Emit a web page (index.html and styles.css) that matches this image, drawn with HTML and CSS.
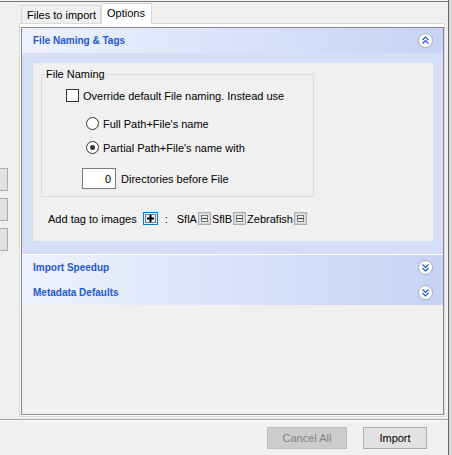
FILE: index.html
```html
<!DOCTYPE html>
<html>
<head>
<meta charset="utf-8">
<link rel="stylesheet" href="styles.css">
</head>
<body>
<div class="window">
  <div class="main">
    <div class="top">
      <div class="stubs">
        <div class="stub"></div>
        <div class="stub"></div>
        <div class="stub"></div>
      </div>
      <div class="tabs">
        <div class="tabstrip">
          <div class="tab">Files to import</div>
          <div class="tab active">Options</div>
        </div>
        <div class="pane">
          <div class="frame">
            <div class="hdr">
              <span>File Naming &amp; Tags</span>
              <svg class="circ" width="15" height="15" viewBox="0 0 15 15"><circle cx="7.5" cy="7.5" r="7" fill="#fff" stroke="#a9a9b4"/><path d="M4.5 7L7.5 4L10.5 7M4.5 10.5L7.5 7.5L10.5 10.5" fill="none" stroke="#2157d6" stroke-width="1.2"/></svg>
            </div>
            <div class="content1">
              <div class="box">
                <fieldset class="fs">
                  <legend>File Naming</legend>
                  <div class="row r-check"><span class="chk"></span><span>Override default File naming. Instead use</span></div>
                  <div class="row r-full"><span class="radio"></span><span>Full Path+File's name</span></div>
                  <div class="row r-part"><span class="radio on"></span><span>Partial Path+File's name with</span></div>
                  <div class="row r-num"><span class="num">0</span><span>Directories before File</span></div>
                </fieldset>
                <div class="row tagrow">
                  <span>Add tag to images</span>
                  <svg class="plus" width="15" height="13" viewBox="0 0 15 13"><rect x="0.5" y="0.5" width="14" height="12" fill="#e5f1fb" stroke="#0078d7"/><rect x="2.5" y="2.5" width="10" height="8" fill="none" stroke="#000" stroke-dasharray="1 1"/><rect x="6.5" y="3" width="2" height="7" fill="#000"/><rect x="4" y="5.5" width="7" height="2" fill="#000"/></svg>
                  <span class="colon">:</span>
                  <span class="tag first">SflA</span>
                  <svg class="minus" width="13" height="13" viewBox="0 0 13 13"><rect x="0.5" y="0.5" width="12" height="12" fill="#e1e1e1" stroke="#adadad"/><rect x="1.5" y="1.5" width="10" height="10" fill="none" stroke="#d4d4d4"/><rect x="3.5" y="3.5" width="6" height="6" fill="#f2f2f2" stroke="#7a7a7a"/><path d="M4 6.5h5" stroke="#333"/></svg>
                  <span class="tag">SflB</span>
                  <svg class="minus" width="13" height="13" viewBox="0 0 13 13"><rect x="0.5" y="0.5" width="12" height="12" fill="#e1e1e1" stroke="#adadad"/><rect x="1.5" y="1.5" width="10" height="10" fill="none" stroke="#d4d4d4"/><rect x="3.5" y="3.5" width="6" height="6" fill="#f2f2f2" stroke="#7a7a7a"/><path d="M4 6.5h5" stroke="#333"/></svg>
                  <span class="tag">Zebrafish</span>
                  <svg class="minus" width="13" height="13" viewBox="0 0 13 13"><rect x="0.5" y="0.5" width="12" height="12" fill="#e1e1e1" stroke="#adadad"/><rect x="1.5" y="1.5" width="10" height="10" fill="none" stroke="#d4d4d4"/><rect x="3.5" y="3.5" width="6" height="6" fill="#f2f2f2" stroke="#7a7a7a"/><path d="M4 6.5h5" stroke="#333"/></svg>
                </div>
              </div>
            </div>
            <div class="hdr">
              <span>Import Speedup</span>
              <svg class="circ" width="15" height="15" viewBox="0 0 15 15"><circle cx="7.5" cy="7.5" r="7" fill="#fff" stroke="#a9a9b4"/><path d="M4.5 4.5L7.5 7.5L10.5 4.5M4.5 8L7.5 11L10.5 8" fill="none" stroke="#2157d6" stroke-width="1.2"/></svg>
            </div>
            <div class="hdr">
              <span>Metadata Defaults</span>
              <svg class="circ" width="15" height="15" viewBox="0 0 15 15"><circle cx="7.5" cy="7.5" r="7" fill="#fff" stroke="#a9a9b4"/><path d="M4.5 4.5L7.5 7.5L10.5 4.5M4.5 8L7.5 11L10.5 8" fill="none" stroke="#2157d6" stroke-width="1.2"/></svg>
            </div>
          </div>
        </div>
      </div>
    </div>
    <div class="sep"></div>
    <div class="footer">
      <div class="btn disabled cancel">Cancel All</div>
      <div class="btn import">Import</div>
    </div>
  </div>
  <div class="edge"></div>
</div>
</body>
</html>
```
FILE: styles.css
```css
body {
  margin: 0;
  background: #f0f0f0;
  font-family: "Liberation Sans", Arial, sans-serif;
  font-size: 11px;
  color: #000;
}
.window {
  width: 452px;
  height: 455px;
  display: flex;
  overflow: hidden;
}
.main {
  width: 448px;
  border-right: 1px solid #646464;
  padding-top: 1px;
  display: flex;
  flex-direction: column;
}
.edge {
  flex: 1;
  background: #dcdcdc;
}
.top {
  display: flex;
  border-top: 1px solid #7a7a7a;
}
.stubs {
  width: 19px;
  padding-top: 166px;
  display: flex;
  flex-direction: column;
  gap: 7px;
}
.stub {
  width: 8px;
  height: 23px;
  box-sizing: border-box;
  border: 1px solid #adadad;
  border-left: none;
  background: #e1e1e1;
}
.tabs {
  width: 426px;
}
.tabstrip {
  display: flex;
  align-items: flex-end;
  height: 21px;
  padding-left: 2px;
  position: relative;
  z-index: 1;
}
.tab {
  width: 80px;
  height: 18px;
  box-sizing: border-box;
  border: 1px solid #d9d9d9;
  border-bottom: none;
  padding: 0 0 0 5px;
  display: flex;
  align-items: center;
  background: #f0f0f0;
  white-space: nowrap;
}
.tab.active {
  width: 51px;
  height: 21px;
  margin-bottom: -1px;
  background: #fff;
  padding-bottom: 2px;
}
.pane {
  border: 1px solid #d9d9d9;
  background: #fff;
  padding: 3px 0 1px 1px;
}
.frame {
  border: 1px solid #828790;
  height: 386px;
  background: #f0f0f0;
}
.hdr {
  height: 25px;
  display: flex;
  align-items: center;
  justify-content: space-between;
  padding: 0 10px 0 11px;
  background: linear-gradient(to right, #eff2fc, #c6d3f5);
  color: #2157d6;
  font-weight: bold;
  font-size: 10px;
}
.circ {
  display: block;
}
.content1 {
  background: #d5def6;
  padding: 10px 10px 13px 11px;
  border-bottom: 1px solid #fff;
}
.box {
  background: #f0f0f0;
  height: 178px;
  overflow: hidden;
}
.fs {
  margin: 5px 0 0 8px;
  padding: 0 0 7px 0;
  border: 1px solid #dcdcdc;
  width: 273px;
  box-sizing: border-box;
  min-inline-size: 0;
}
.fs legend {
  padding: 0 1px;
  margin-left: 3px;
  line-height: 13px;
}
.row {
  display: flex;
  align-items: center;
  gap: 4px;
  height: 13px;
  white-space: nowrap;
}
.r-check { margin: 8px 0 0 24px; }
.r-full { margin: 15px 0 0 44px; }
.r-part { margin: 11px 0 0 44px; }
.r-num { margin: 14px 0 0 40px; height: 21px; gap: 5px; }
.chk {
  width: 13px;
  height: 13px;
  box-sizing: border-box;
  border: 1px solid #333;
  background: #fff;
}
.radio {
  width: 13px;
  height: 13px;
  box-sizing: border-box;
  border: 1px solid #333;
  border-radius: 50%;
  background: #fff;
  display: flex;
  align-items: center;
  justify-content: center;
}
.radio.on::after {
  content: "";
  width: 5px;
  height: 5px;
  border-radius: 50%;
  background: #333;
}
.num {
  width: 34px;
  height: 21px;
  box-sizing: border-box;
  border: 1px solid #7a7a7a;
  background: #fff;
  display: flex;
  align-items: center;
  justify-content: flex-end;
  padding-right: 4px;
}
.tagrow {
  margin: 15px 0 0 15px;
  gap: 0;
}
.plus { display: block; margin-left: 6px; }
.colon { margin-left: 7px; }
.tag { margin-left: 1px; }
.tag.first { margin-left: 9px; }
.minus { display: block; margin-left: 1px; }
.sep {
  margin-top: 2px;
  border-top: 1px solid #a0a0a0;
  border-bottom: 1px solid #fff;
}
.footer {
  display: flex;
  justify-content: flex-end;
  gap: 16px;
  padding: 6px 21px 0 0;
}
.btn {
  height: 22px;
  box-sizing: border-box;
  border: 1px solid #adadad;
  background: #e1e1e1;
  display: flex;
  align-items: center;
  justify-content: center;
}
.btn.disabled {
  background: #cccccc;
  border-color: #bfbfbf;
  color: #838383;
}
.cancel { width: 80px; }
.import { width: 64px; }
```
